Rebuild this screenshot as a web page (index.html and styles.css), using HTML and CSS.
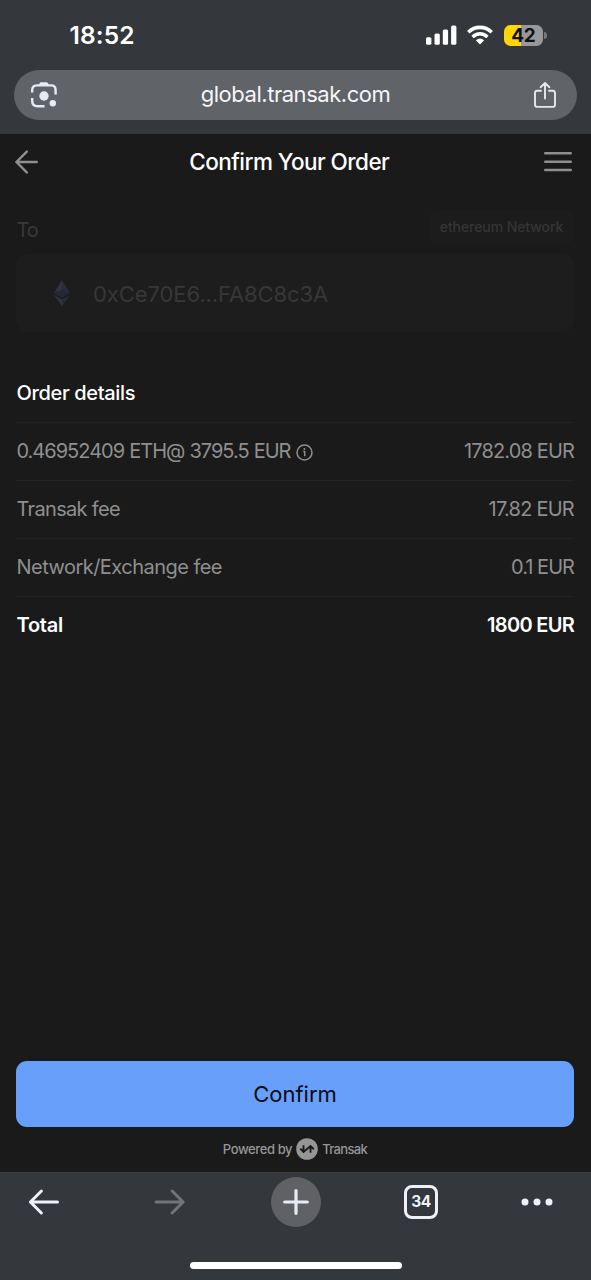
FILE: index.html
```html
<!DOCTYPE html>
<html lang="en">
<head>
<meta charset="utf-8">
<title>Confirm Your Order</title>
<link rel="stylesheet" href="styles.css">
</head>
<body>
<div class="phone">
  <header class="browser-top">
    <div class="status">
      <span class="time">18:52</span>
      <div class="status-icons">
        <svg class="signal" width="31" height="20" viewBox="0 0 31 20" fill="#fff"><rect x="0" y="12.3" width="5.4" height="7.4" rx="1.5"/><rect x="8.5" y="8.6" width="5.3" height="11.1" rx="1.5"/><rect x="16.8" y="4.6" width="5.3" height="15.1" rx="1.5"/><rect x="25.1" y="0.4" width="5.3" height="19.3" rx="1.5"/></svg>
        <svg class="wifi" width="26" height="20" viewBox="0 0 26 20"><path d="M1.3 7.2C8 .8 18 .8 24.7 7.2" fill="none" stroke="#fff" stroke-width="3.6"/><path d="M5.6 12C10 7.8 16 7.8 20.4 12" fill="none" stroke="#fff" stroke-width="3.5"/><path d="M8.8 15.2Q13 11.6 17.2 15.2L13 19.4Z" fill="#fff"/></svg>
        <div class="battery"><span class="battery-body">42</span><i class="battery-tip"></i></div>
      </div>
    </div>
    <div class="address-bar">
      <svg width="28" height="28" viewBox="0 0 28 28" fill="none" stroke="#e6eaf3" stroke-width="2.4"><path d="M2.2 11.5V9Q2.2 4.4 6.8 4.4H21Q25.6 4.4 25.6 9v4.5M2.2 17v2.8Q2.2 25.3 7.7 25.3H14.5"/><path d="M8 4.8L10.4 1.2H17.2L19.6 4.8Z" fill="#e6eaf3" stroke="none"/><circle cx="14" cy="15" r="4.7" fill="#e6eaf3" stroke="none"/><circle cx="22.8" cy="22.2" r="3.2" fill="#e6eaf3" stroke="none"/></svg>
      <span class="url">global.transak.com</span>
      <svg width="24" height="28" viewBox="0 0 24 28" fill="none" stroke="#e6e8ed" stroke-width="1.9" stroke-linecap="round" stroke-linejoin="round"><path d="M8 9.8H4.4Q2 9.8 2 12.2V23.4Q2 25.9 4.4 25.9H19.6Q22 25.9 22 23.4V12.2Q22 9.8 19.6 9.8H16M12 17.5V2M7.6 6.2L12 1.9L16.4 6.2"/></svg>
    </div>
  </header>
  <main class="page">
    <div class="title-bar">
      <svg width="24" height="24" viewBox="0 0 24 24" fill="none" stroke="#8f8f8f" stroke-width="2.4" stroke-linecap="round" stroke-linejoin="round"><path d="M22.8 12H2.4M12.8 1.6L2.4 12L12.8 22.4"/></svg>
      <h1 class="title">Confirm Your Order</h1>
      <svg width="28" height="22" viewBox="0 0 28 22" stroke="#8f8f8f" stroke-width="2.4" stroke-linecap="round"><path d="M1.2 2.2H26.8M1.2 10.7H26.8M1.2 19H26.8"/></svg>
    </div>
    <section class="destination">
      <div class="to-row"><span class="to">To</span><span class="network"><span class="network-text">ethereum Network</span></span></div>
      <div class="wallet">
        <svg width="18" height="28" viewBox="0 0 18 28"><path d="M9 1L1 14L9 18.5Z" fill="#303342"/><path d="M9 1L17 14L9 18.5Z" fill="#292c3b"/><path d="M1 14L9 10.5L17 14L9 18.5Z" fill="#242737"/><path d="M1 16L9 20.5V27Z" fill="#303342"/><path d="M17 16L9 20.5V27Z" fill="#282b3a"/></svg>
        <span class="wallet-id">0xCe70E6...FA8C8c3A</span>
      </div>
    </section>
    <section class="details">
      <h2 class="details-title"><span class="details-heading">Order details</span></h2>
      <div class="row"><span class="label rate">0.46952409 ETH@ 3795.5 EUR</span><svg class="info" width="17" height="17" viewBox="0 0 17 17" fill="none" stroke="#8f8f8f" stroke-width="1.5"><circle cx="8.5" cy="8.5" r="7.5"/><path d="M7.2 7.6h1.5v4.6"/><circle cx="8.4" cy="5" r="1" fill="#8f8f8f" stroke="none"/></svg><span class="value v-price">1782.08 EUR</span></div>
      <div class="row"><span class="label fee">Transak fee</span><span class="value v-fee">17.82 EUR</span></div>
      <div class="row"><span class="label exchange">Network/Exchange fee</span><span class="value v-exchange">0.1 EUR</span></div>
      <div class="row total"><span class="label t-label">Total</span><span class="value v-total">1800 EUR</span></div>
    </section>
    <footer class="actions">
      <button class="confirm"><span class="confirm-text">Confirm</span></button>
      <div class="powered"><span class="by">Powered by</span>
        <svg width="22" height="22" viewBox="0 0 22 22"><circle cx="11" cy="11" r="10.8" fill="#969696"/><path d="M4.2 10.7L7.5 14L14.5 8L17.8 11.2M7.5 7.2V14M14.5 8V14.8" fill="none" stroke="#1a1a1a" stroke-width="1.9"/></svg>
        <span class="brand">Transak</span></div>
    </footer>
  </main>
  <nav class="browser-bottom">
    <div class="tools">
      <svg width="32" height="28" viewBox="0 0 32 28" fill="none" stroke="#eef1fa" stroke-width="3" stroke-linecap="round" stroke-linejoin="round"><path d="M29.5 14H2.4M13.4 3L2.4 14L13.4 25"/></svg>
      <svg class="forward" width="32" height="28" viewBox="0 0 32 28" fill="none" stroke="#747577" stroke-width="3" stroke-linecap="round" stroke-linejoin="round"><path d="M2 14H29.1M18.1 3L29.1 14L18.1 25"/></svg>
      <span class="new-tab"><svg width="26" height="26" viewBox="0 0 26 26" stroke="#e8ebf3" stroke-width="3.2" stroke-linecap="round"><path d="M13 1.7V24.3M1.7 13H24.3"/></svg></span>
      <span class="tabs">34</span>
      <svg class="more" width="32" height="8" viewBox="0 0 32 8" fill="#eef1fa"><circle cx="4" cy="4" r="3.5"/><circle cx="16" cy="4" r="3.5"/><circle cx="28" cy="4" r="3.5"/></svg>
    </div>
    <div class="home-indicator"></div>
  </nav>
</div>
</body>
</html>
```
FILE: styles.css
```css
* { box-sizing: border-box; }
body { margin: 0; background: #1a1a1a; font-family: Inter, "Liberation Sans", sans-serif; }
svg { display: block; flex: none; }
h1, h2 { margin: 0; }
.phone { width: 591px; height: 1280px; display: flex; flex-direction: column; overflow: hidden; white-space: nowrap; }
.browser-top { height: 134px; background: #34373b; padding: 0 14px; }
.status { height: 70px; display: flex; justify-content: space-between; padding: 0 30.5px 0 55.5px; align-items: center; }
.time { color: #fff; font-size: 24.5px; font-weight: 600; letter-spacing: .1px; }
.status-icons { display: flex; align-items: center; }
.wifi { margin: 0 11px 0 10px; }
.battery { display: flex; align-items: center; gap: 1px; }
.battery-body { width: 39.5px; height: 21px; border-radius: 6.5px; background: linear-gradient(90deg, #fed709 43%, #98989b 43%); color: #111; font-size: 19px; line-height: 21px; font-weight: 700; text-align: center; letter-spacing: -.5px; }
.battery-tip { width: 2.5px; height: 7px; background: #78797c; border-radius: 0 3px 3px 0; }
.address-bar { height: 50px; border-radius: 25px; background: #606367; display: flex; align-items: center; justify-content: space-between; padding: 0 20px 0 16px; }
.url { color: #f5f6fb; font-size: 22px; line-height: 28px; letter-spacing: -.46px; margin-bottom: 2px; }
.page { height: 1038px; background: #1a1a1a; display: flex; flex-direction: column; padding: 0 17px 0 16px; }
.title-bar { height: 56px; display: flex; align-items: center; justify-content: space-between; padding-right: 2px; margin-left: -2px; }
.title { color: #fff; font-size: 22.5px; font-weight: 500; line-height: 28px; letter-spacing: -.54px; margin-right: 3.5px; }
.destination { margin-top: 20px; }
.to-row { display: flex; justify-content: space-between; height: 44px; }
.to { font-size: 20px; line-height: 24px; color: #393939; padding: 8px 0 0 .5px; letter-spacing: -1.2px; }
.network { width: 145px; height: 34px; border-radius: 8px; background: #1c1c1c; display: flex; align-items: center; justify-content: center; }
.network-text { font-size: 14px; font-weight: 500; color: #353535; letter-spacing: -.08px; margin-bottom: 1px; }
.wallet { height: 78px; background: #1d1d1d; border-radius: 12px; display: flex; align-items: center; padding-left: 37px; gap: 22px; }
.wallet-id { font-size: 22px; line-height: 28px; color: #373737; letter-spacing: -.08px; margin-top: 2px; }
.details { margin-top: 32px; }
.details-title { height: 59px; border-bottom: 1px solid #222; display: flex; align-items: center; font-size: 20px; font-weight: 500; color: #fff; letter-spacing: -.34px; padding-left: .5px; }
.row { height: 58px; display: flex; align-items: center; border-bottom: 1px solid #222; color: #8f8f8f; font-size: 20px; line-height: 24px; padding: 0 0 2px .5px; }
.row .value { margin-left: auto; }
.rate { letter-spacing: -1px; word-spacing: .5px; }
.fee { letter-spacing: -.68px; }
.exchange { letter-spacing: -.53px; }
.v-price { letter-spacing: -.85px; }
.v-fee { letter-spacing: -.75px; }
.v-exchange { letter-spacing: -.95px; }
.v-total { letter-spacing: -.7px; }
.t-label { letter-spacing: -.25px; }
.info { margin-left: 6px; margin-top: 3px; }
.total { color: #fff; font-weight: 600; border-bottom: 0; }
.actions { margin-top: auto; height: 111px; }
.confirm { display: flex; width: 100%; height: 66px; align-items: center; justify-content: center; border: 0; border-radius: 11px; background: #689ffb; color: #070b16; font: 400 22px/28px Inter, sans-serif; }
.powered { display: flex; height: 22px; margin-top: 11px; align-items: center; justify-content: center; gap: 4px; color: #969696; font-size: 13px; font-weight: 500; }
.by { letter-spacing: -.4px; }
.brand { letter-spacing: -.65px; }
.browser-bottom { height: 108px; background: #34373b; border-top: 1px solid #3b3c3e; display: flex; flex-direction: column; align-items: center; }
.tools { width: 100%; height: 58px; display: flex; align-items: center; padding-left: 28px; }
.forward { margin: 0 85px 0 94px; }
.new-tab { width: 50px; height: 50px; border-radius: 50%; background: #5f6165; display: flex; align-items: center; justify-content: center; }
.tabs { width: 34px; height: 34px; margin: 0 83px; border: 3px solid #eef1fa; border-radius: 8px; color: #eef1fa; font-size: 15.5px; font-weight: 700; line-height: 28px; text-align: center; letter-spacing: -.4px; }
.home-indicator { width: 212px; height: 7px; border-radius: 4px; background: #fff; margin-top: 31px; }
```
